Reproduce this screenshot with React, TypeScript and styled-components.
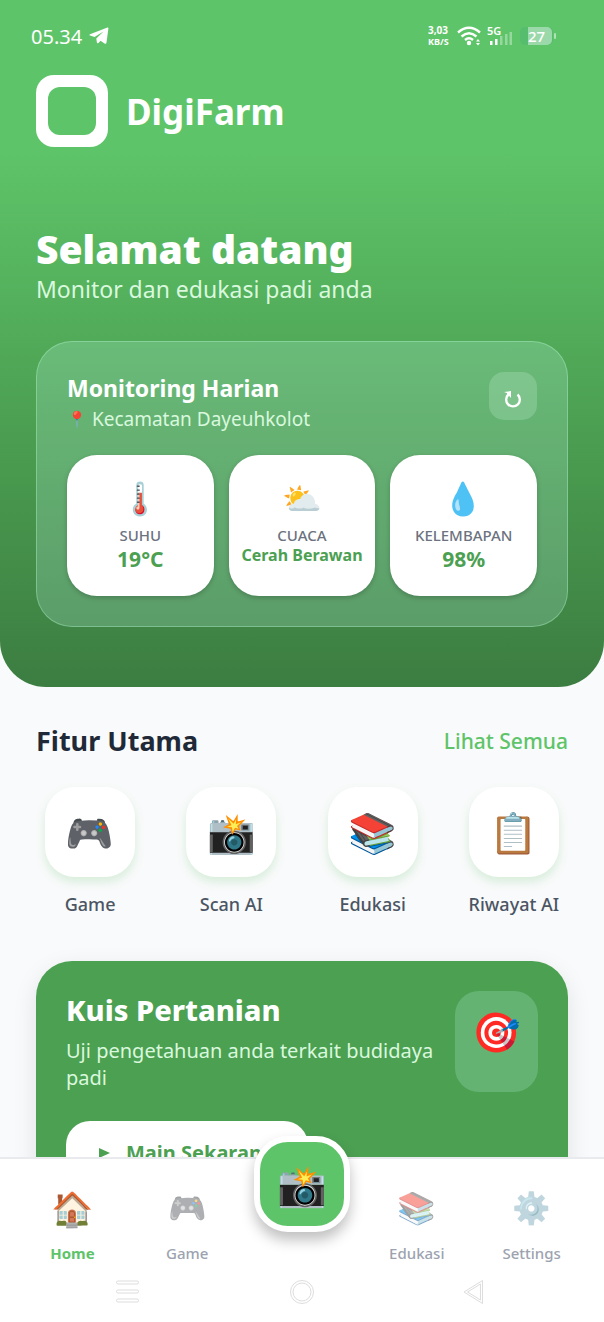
import React from 'react';
import styled, { createGlobalStyle } from 'styled-components';

const GlobalStyle = createGlobalStyle`
  * { box-sizing: border-box; margin: 0; padding: 0; }
  body { font-family: "Noto Sans", sans-serif; background: #f9fafb; }
  button { font: inherit; border: 0; background: none; cursor: pointer; }
  a { text-decoration: none; color: inherit; }
`;

const Screen = styled.div`
  display: flex;
  flex-direction: column;
  height: 100vh;
`;

const Content = styled.main`
  flex: 1;
  min-height: 0;
  overflow-y: auto;
  scrollbar-width: none;
`;

const Hero = styled.header`
  padding: 24px 36px 60px;
  color: #fff;
  border-radius: 0 0 46px 46px;
  background: linear-gradient(#5ec469 150px, #4ca052 420px, #3c7d41);
`;

const StatusBar = styled.div`
  display: flex;
  justify-content: space-between;
  align-items: center;
  height: 24px;
  margin: 0 -5px;
`;

const StatusGroup = styled.div`
  display: flex;
  align-items: center;
  gap: 7px;
  font-size: 20px;
`;

const Brand = styled.div`
  display: flex;
  align-items: center;
  gap: 18px;
  margin-top: 27px;
  font-size: 35px;
  font-weight: 700;
`;

const Logo = styled.span`
  display: grid;
  place-items: center;
  width: 72px;
  height: 72px;
  border-radius: 18px;
  background: #fff;

  &::after {
    content: "";
    width: 48px;
    height: 48px;
    border-radius: 12px;
    background: #5ec469;
  }
`;

const Welcome = styled.h1`
  margin-top: 75px;
  font-size: 39px;
  line-height: 54px;
  font-weight: 900;
`;

const Tagline = styled.p`
  font-size: 23px;
  line-height: 26px;
  color: #d9f8dd;
`;

const Monitor = styled.section`
  margin-top: 39px;
  padding: 30px;
  border: 1px solid rgba(190, 255, 215, 0.35);
  border-radius: 36px;
  background: rgba(206, 255, 250, 0.2);
`;

const MonitorHead = styled.div`
  display: flex;
  justify-content: space-between;
  align-items: flex-start;
`;

const MonitorTitle = styled.h2`
  font-size: 23px;
  line-height: 32px;
  font-weight: 700;
`;

const Place = styled.p`
  display: flex;
  align-items: center;
  gap: 5px;
  height: 31px;
  font-size: 19px;
  line-height: 31px;
  color: #d9f8dd;
`;

const Refresh = styled.button`
  display: grid;
  place-items: center;
  width: 48px;
  height: 48px;
  border-radius: 15px;
  background: rgba(220, 255, 235, 0.2);
`;

const Stats = styled.div`
  display: grid;
  grid-template-columns: repeat(3, 1fr);
  gap: 15px;
  margin-top: 20px;
`;

const Stat = styled.div`
  display: flex;
  flex-direction: column;
  align-items: center;
  height: 141px;
  padding-top: 24px;
  border-radius: 30px;
  background: #fff;
  box-shadow: 0 2px 5px rgba(0, 0, 0, 0.2);
`;

const StatLabel = styled.span`
  margin-top: 6px;
  font-size: 15px;
  line-height: 20px;
  font-weight: 500;
  color: #6b7280;
`;

const StatValue = styled.strong<{ $small?: boolean }>`
  font-size: ${p => (p.$small ? 16 : 21)}px;
  line-height: ${p => (p.$small ? 21 : 29)}px;
  font-weight: 700;
  color: #4ca052;
  white-space: nowrap;
`;

const Emoji = styled.span<{ $size: number; $faded?: boolean }>`
  font-family: "Noto Color Emoji", sans-serif;
  font-size: ${p => p.$size}px;
  line-height: 40px;
  height: 40px;
  opacity: ${p => (p.$faded ? 0.5 : 1)};
`;

const Section = styled.section`
  padding: 36px 36px 0;
`;

const SectionHead = styled.div`
  display: flex;
  justify-content: space-between;
  align-items: center;
`;

const SectionTitle = styled.h2`
  font-size: 27px;
  line-height: 36px;
  font-weight: 700;
  color: #1f2937;
`;

const SeeAll = styled.a`
  font-size: 21px;
  font-weight: 500;
  color: #5ec469;
`;

const Features = styled.div`
  display: grid;
  grid-template-columns: repeat(4, 1fr);
  gap: 33px;
  margin-top: 28px;
`;

const Feature = styled.button`
  display: flex;
  flex-direction: column;
  align-items: center;
  gap: 14px;
  font-size: 18px;
  line-height: 26px;
  font-weight: 500;
  color: #4b5563;
  white-space: nowrap;
`;

const FeatureTile = styled.span`
  display: grid;
  place-items: center;
  width: 90px;
  height: 90px;
  padding-top: 4px;
  border-radius: 30px;
  background: #fff;
  box-shadow: 0 5px 10px rgba(94, 196, 105, 0.22);
`;

const Quiz = styled.article`
  margin-top: 44px;
  padding: 30px;
  border-radius: 36px;
  color: #fff;
  background: #4ca052;
  box-shadow: 0 8px 24px rgba(0, 0, 0, 0.1);
`;

const QuizTop = styled.div`
  display: flex;
  justify-content: space-between;
`;

const QuizTitle = styled.h2`
  font-size: 29px;
  line-height: 38px;
  font-weight: 800;
`;

const QuizText = styled.p`
  margin-top: 8px;
  font-size: 20px;
  line-height: 27px;
  color: #d9f8dd;
`;

const QuizIcon = styled.span`
  flex: none;
  display: flex;
  justify-content: center;
  width: 83px;
  height: 101px;
  padding-top: 22px;
  border-radius: 24px;
  background: rgba(206, 255, 245, 0.2);
`;

const Play = styled.button`
  display: flex;
  align-items: center;
  gap: 16px;
  margin-top: 29px;
  padding: 18px 33px;
  border-radius: 24px;
  background: #fff;
  color: #4ca052;
  font-size: 20px;
  line-height: 28px;
  font-weight: 700;
`;

const TabBar = styled.nav`
  position: relative;
  display: grid;
  grid-template-columns: repeat(5, 1fr);
  height: 106px;
  padding: 30px 15px 0;
  border-top: 2px solid #e8eaed;
  background: #fff;
`;

const Tab = styled.button<{ $active?: boolean }>`
  display: flex;
  flex-direction: column;
  align-items: center;
  gap: 14px;
  font-size: 15px;
  line-height: 20px;
  font-weight: ${p => (p.$active ? 700 : 500)};
  color: ${p => (p.$active ? '#5ec469' : '#9ca3af')};
`;

const ScanSlot = styled.div`
  display: flex;
  justify-content: center;
`;

const Scan = styled.button`
  position: absolute;
  top: -23px;
  display: grid;
  place-items: center;
  width: 96px;
  height: 96px;
  padding-top: 5px;
  border: 6px solid #fff;
  border-radius: 34px;
  background: #5ec469;
  box-shadow: 0 8px 14px rgba(0, 0, 0, 0.25);
`;

const SystemBar = styled.div`
  display: flex;
  justify-content: space-between;
  padding: 16px 116px 17px;
  background: #fff;
`;

const stats = [
  { icon: '🌡️', label: 'SUHU', value: '19°C' },
  { icon: '⛅', label: 'CUACA', value: 'Cerah Berawan', small: true },
  { icon: '💧', label: 'KELEMBAPAN', value: '98%' },
];

const features = [
  { icon: '🎮', label: 'Game' },
  { icon: '📸', label: 'Scan AI' },
  { icon: '📚', label: 'Edukasi' },
  { icon: '📋', label: 'Riwayat AI' },
];

function StatusIcons() {
  return (
    <svg width="145" height="24" viewBox="0 0 145 24" fill="#fff" fontFamily="Noto Sans">
      <text x="0" y="10" fontSize="10" fontWeight="700">3,03</text>
      <text x="0" y="21" fontSize="9" fontWeight="700">KB/S</text>
      <g fill="none" stroke="#fff" strokeWidth="2.4">
        <path d="M30 8.500Q41 -1 52 8.500" />
        <path d="M33.500 12.500Q41 6 48.500 12.500" />
        <path d="M37 16Q41 12.500 45 16" />
      </g>
      <circle cx="41" cy="19" r="2.200" />
      <path d="M48 17.500l2-2.500 2 2.500zM48 19l2 2.500 2-2.500z" />
      <text x="59" y="11" fontSize="11" fontWeight="600">5G</text>
      <rect x="62" y="17" width="2.500" height="4" />
      <rect x="67" y="15" width="2.500" height="6" />
      <g opacity=".35">
        <rect x="72" y="12" width="2.500" height="9" />
        <rect x="77" y="10" width="2.500" height="11" />
        <rect x="81.500" y="8" width="2.500" height="13" />
      </g>
      <rect x="92" y="3" width="33" height="18" rx="5" fill="#55bd6d" />
      <path d="M100 3h19a5 5 0 0 1 5 5v8a5 5 0 0 1-5 5h-19z" opacity=".42" />
      <rect x="126" y="9" width="2" height="6" rx="1" opacity=".5" />
      <text x="100" y="18" fontSize="15" fontWeight="500">27</text>
    </svg>
  );
}

export default function App() {
  return (
    <Screen>
      <GlobalStyle />
      <Content>
        <Hero>
          <StatusBar>
            <StatusGroup>
              05.34
              <svg width="20" height="18" viewBox="0 0 20 18" fill="#fff">
                <path d="M18.500 .5Q19.500 .2 19.400 1.500L17.500 15.500Q17.200 17.500 15.500 16.500L11.500 13.800L9.500 16Q8 17 7.800 15L7.300 11.500L14.500 4.500L5.500 10L1 8.600Q-.3 8 1 7.200Z" />
              </svg>
            </StatusGroup>
            <StatusIcons />
          </StatusBar>
          <Brand><Logo />DigiFarm</Brand>
          <Welcome>Selamat datang</Welcome>
          <Tagline>Monitor dan edukasi padi anda</Tagline>
          <Monitor>
            <MonitorHead>
              <div>
                <MonitorTitle>Monitoring Harian</MonitorTitle>
                <Place><Emoji $size={16}>📍</Emoji>Kecamatan Dayeuhkolot</Place>
              </div>
              <Refresh aria-label="Muat ulang">
                <svg width="18" height="28" viewBox="0 0 18 28" fill="none" stroke="#fff" strokeWidth="2.4">
                  <path d="M4.500 12.500A6.800 6.800 0 1 0 13.500 12.500" />
                  <path d="M0 10L7 9V16L5 13.700L2.600 14L3.200 11.300Z" fill="#fff" stroke="none" />
                </svg>
              </Refresh>
            </MonitorHead>
            <Stats>
              {stats.map(s => (
                <Stat key={s.label}>
                  <Emoji $size={32}>{s.icon}</Emoji>
                  <StatLabel>{s.label}</StatLabel>
                  <StatValue $small={s.small}>{s.value}</StatValue>
                </Stat>
              ))}
            </Stats>
          </Monitor>
        </Hero>
        <Section>
          <SectionHead>
            <SectionTitle>Fitur Utama</SectionTitle>
            <SeeAll href="#fitur">Lihat Semua</SeeAll>
          </SectionHead>
          <Features>
            {features.map(f => (
              <Feature key={f.label}>
                <FeatureTile><Emoji $size={39}>{f.icon}</Emoji></FeatureTile>
                {f.label}
              </Feature>
            ))}
          </Features>
          <Quiz>
            <QuizTop>
              <div>
                <QuizTitle>Kuis Pertanian</QuizTitle>
                <QuizText>Uji pengetahuan anda terkait budidaya padi</QuizText>
              </div>
              <QuizIcon><Emoji $size={39}>🎯</Emoji></QuizIcon>
            </QuizTop>
            <Play>
              <svg width="11" height="10" viewBox="0 0 11 10"><path d="M0 0L11 5L0 10Z" fill="#4ca052" /></svg>
              Main Sekarang
            </Play>
          </Quiz>
        </Section>
      </Content>
      <TabBar>
        <Tab $active><Emoji $size={34}>🏠</Emoji>Home</Tab>
        <Tab><Emoji $size={31} $faded>🎮</Emoji>Game</Tab>
        <ScanSlot><Scan aria-label="Scan AI"><Emoji $size={40}>📸</Emoji></Scan></ScanSlot>
        <Tab><Emoji $size={31} $faded>📚</Emoji>Edukasi</Tab>
        <Tab><Emoji $size={31} $faded>⚙️</Emoji>Settings</Tab>
      </TabBar>
      <SystemBar>
        <svg width="24" height="26" viewBox="0 0 24 26" fill="none" stroke="#ddd">
          <rect x=".5" y="2" width="22" height="3" rx="1.500" /><rect x=".5" y="11" width="22" height="3" rx="1.500" /><rect x=".5" y="20" width="22" height="3" rx="1.500" />
        </svg>
        <svg width="26" height="26" viewBox="0 0 26 26" fill="none" stroke="#ddd">
          <circle cx="13" cy="13" r="11.500" /><circle cx="13" cy="13" r="9" />
        </svg>
        <svg width="24" height="26" viewBox="0 0 24 26" fill="none" stroke="#ddd" strokeLinejoin="round">
          <path d="M0 13L18.500 1.500V24.500Z" /><path d="M3.500 13L16.500 5V21Z" />
        </svg>
      </SystemBar>
    </Screen>
  );
}
